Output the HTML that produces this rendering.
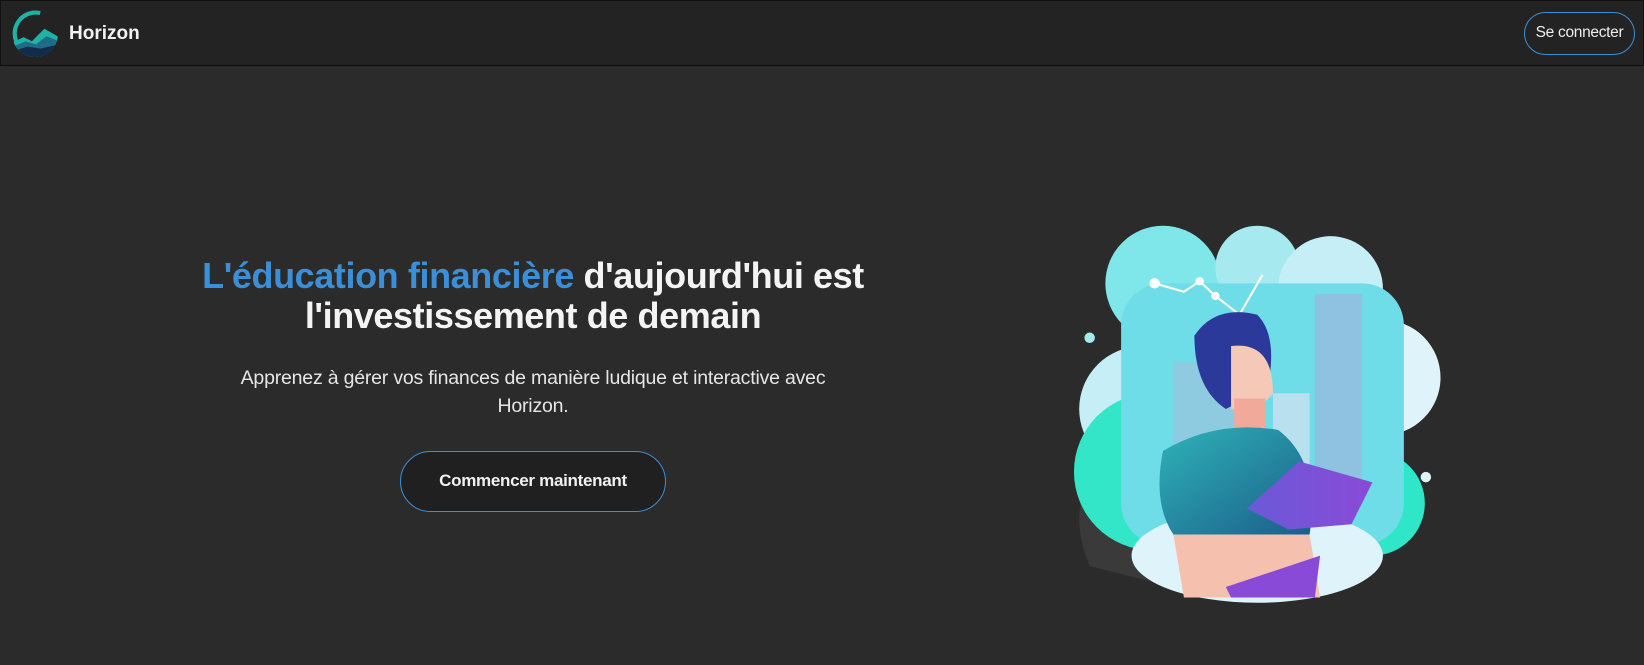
<!DOCTYPE html>
<html><head><meta charset="utf-8"><style>
*{margin:0;padding:0;box-sizing:border-box}
body{width:1644px;height:665px;background:#2b2b2b;font-family:"Liberation Sans",sans-serif;overflow:hidden;position:relative;color:#fff}
.hdr{position:absolute;left:0;top:0;width:1644px;height:66px;background:#232323;border:1px solid #111;border-bottom:1px solid #0d0d0d}
.logo{position:absolute;left:10px;top:9px}
.brand{position:absolute;left:68px;top:22px;font-size:19px;font-weight:bold;color:#f2f2f2}
.login{position:absolute;left:1523px;top:11px;width:111px;height:43px;border:1.5px solid #3a8fd8;border-radius:22px;font-size:15.5px;color:#eee;text-align:center;line-height:40px;letter-spacing:-0.3px}
h1{position:absolute;left:133px;width:800px;top:256px;text-align:center;font-size:36px;line-height:40px;font-weight:bold;color:#f4f4f4;letter-spacing:-0.4px}
h1 span{color:#3a8fd8}
.sub{position:absolute;left:183px;width:700px;top:364px;text-align:center;font-size:19.5px;line-height:28px;color:#e6e6e6;letter-spacing:-0.2px}
.btn{position:absolute;left:400px;top:451px;width:266px;height:61px;border:1.5px solid #3a8fd8;border-radius:31px;background:#202020;text-align:center;line-height:58px;font-size:17px;font-weight:bold;color:#f0f0f0;letter-spacing:-0.3px}
</style></head><body>
<div class="hdr">
<svg class="logo" width="48" height="48" viewBox="0 0 46 46">
<defs><clipPath id="c"><circle cx="23" cy="23" r="22"/></clipPath></defs>
<g clip-path="url(#c)">
<rect width="46" height="46" fill="#232323"/>
<path d="M0 32 L12 26 L20 30 L32 18 L46 26 L46 46 L0 46Z" fill="#1fb3a6"/>
<path d="M0 36 L14 30 L24 33 L34 25 L46 30 L46 46 L0 46Z" fill="#1d6d8a"/>
<path d="M0 40 L16 35 L28 37 L46 33 L46 46 L0 46Z" fill="#142a4a"/>
</g>
<path d="M5 30 A20 20 0 0 1 28 3" stroke="#1fb3a6" stroke-width="4" fill="none"/>
</svg>
<div class="brand">Horizon</div>
<div class="login">Se connecter</div>
</div>
<h1><span>L'éducation financière</span> d'aujourd'hui est<br>l'investissement de demain</h1>
<div class="sub">Apprenez à gérer vos finances de manière ludique et interactive avec<br>Horizon.</div>
<div class="btn">Commencer maintenant</div>
<svg style="position:absolute;left:1058px;top:210px" width="388" height="398" viewBox="0 0 370 380">
<defs>
<linearGradient id="sh" x1="0" y1="0" x2="1" y2="1"><stop offset="0" stop-color="#2fb3b8"/><stop offset="1" stop-color="#1b5e8a"/></linearGradient>
<linearGradient id="bk" x1="0" y1="0" x2="1" y2="0"><stop offset="0" stop-color="#6a5ad8"/><stop offset="1" stop-color="#8a4ad8"/></linearGradient>
</defs>
<path d="M30 340 Q10 290 30 260 Q60 250 90 280 L110 360Z" fill="#3a3a3a"/>
<circle cx="100" cy="70" r="55" fill="#7fe6ea"/>
<circle cx="190" cy="55" r="40" fill="#a6eaf0"/>
<circle cx="260" cy="75" r="50" fill="#c6eef6"/>
<circle cx="310" cy="160" r="55" fill="#dff3fa"/>
<circle cx="80" cy="190" r="60" fill="#c6eef6"/>
<circle cx="90" cy="250" r="75" fill="#33e6c8"/>
<circle cx="300" cy="280" r="50" fill="#2fe6c8"/>
<rect x="60" y="70" width="270" height="250" rx="40" fill="#6fdde8"/>
<ellipse cx="190" cy="330" rx="120" ry="45" fill="#dff3fa"/>
<rect x="110" y="145" width="65" height="120" fill="#8fcbe0"/>
<rect x="245" y="80" width="45" height="185" fill="#8fc2e0"/>
<rect x="205" y="175" width="35" height="90" fill="#b8e0ee"/>
<polyline points="92,70 120,78 135,68 150,82 173,100 195,62" stroke="#fff" stroke-width="2" fill="none"/>
<circle cx="92" cy="70" r="5" fill="#fff"/><circle cx="135" cy="68" r="4" fill="#fff"/><circle cx="150" cy="82" r="4" fill="#fff"/>
<circle cx="30" cy="122" r="5" fill="#a6eaf0"/><circle cx="351" cy="255" r="5" fill="#dff3fa"/>
<path d="M130 120 Q150 90 190 100 Q210 120 200 170 L160 190 Q130 170 130 120Z" fill="#2b3a9a"/>
<path d="M165 130 Q205 125 205 175 Q190 195 165 190Z" fill="#f6c8b8"/>
<rect x="168" y="180" width="30" height="35" fill="#f1a99a"/>
<path d="M100 230 Q150 200 210 210 Q250 240 240 310 L110 310 Q90 280 100 230Z" fill="url(#sh)"/>
<path d="M110 310 L240 310 L250 370 L120 370Z" fill="#f6c0ae"/>
<path d="M180 285 L230 240 L300 260 L280 300 L220 305Z" fill="url(#bk)"/>
<path d="M160 360 L250 330 L245 370 L165 370Z" fill="#8a4ad8"/>
</svg>
</body></html>
